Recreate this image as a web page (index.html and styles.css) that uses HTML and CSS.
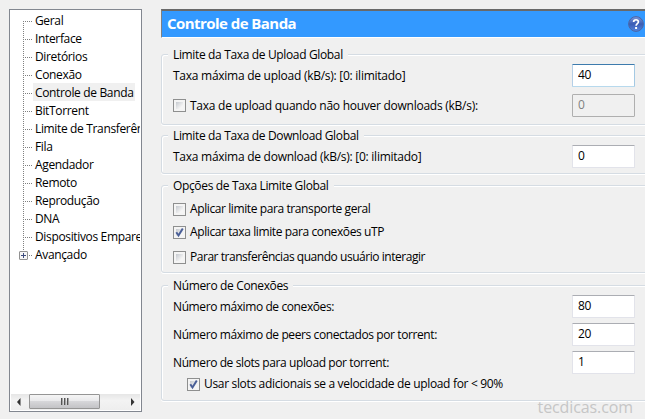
FILE: index.html
```html
<!doctype html>
<html lang="pt-BR">
  <head>
    <meta charset="utf-8">
    <title>Controle de Banda</title>
    <link rel="stylesheet" href="styles.css">
  </head>

  <body>
    <div id="container">
      <div id="sidebar">
        <ul class="tree">
          <li><span>Geral</span></li>
          <li><span>Interface</span></li>
          <li><span>Diretórios</span></li>
          <li><span>Conexão</span></li>
          <li class="selected"><span>Controle de Banda</span></li>
          <li><span>BitTorrent</span></li>
          <li><span>Limite de Transferên</span></li>
          <li><span>Fila</span></li>
          <li><span>Agendador</span></li>
          <li><span>Remoto</span></li>
          <li><span>Reprodução</span></li>
          <li><span>DNA</span></li>
          <li><span>Dispositivos Empare</span></li>
          <li class="parent">
            <svg class="expander" width="9" height="9" viewBox="0 0 9 9">
              <rect x="0.5" y="0.5" width="8" height="8" rx="0.5" fill="#f6f6f6" stroke="#919191" />
              <path d="M2 4.5h5M4.5 2v5" stroke="#3c4b7d" />
            </svg>
            <span>Avançado</span>
          </li>
        </ul>
        <div class="scrollbar">
          <svg width="18" height="16" viewBox="0 0 18 16">
            <path d="M9.5 4v8L6 8z" fill="#333" />
          </svg>
          <div class="thumb"><i></i><i></i><i></i></div>
          <svg width="18" height="16" viewBox="0 0 18 16">
            <path d="M9 4v8l3.5-4z" fill="#333" />
          </svg>
        </div>
      </div>

      <div id="panel">
        <div class="header">
          <h1>Controle de Banda</h1>
          <svg class="help" width="16" height="16" viewBox="0 0 16 16">
            <defs>
              <linearGradient id="ball" x1="0" y1="0" x2="0" y2="1">
                <stop offset="0" stop-color="#7c98dc" />
                <stop offset="0.5" stop-color="#3a5cb4" />
                <stop offset="1" stop-color="#5484de" />
              </linearGradient>
            </defs>
            <circle cx="8" cy="8" r="7.4" fill="url(#ball)" stroke="#4a66a6" />
            <path d="M5.6 6.1C5.6 2.9 10.6 3 10.4 6 10.3 7.6 8.1 7.6 8.1 9.7" fill="none" stroke="#fff" stroke-width="1.7" />
            <rect x="7.1" y="11" width="2" height="2" fill="#fff" />
          </svg>
        </div>

        <section class="group upload">
          <h2>Limite da Taxa de Upload Global</h2>
          <div class="row">
            <label>Taxa máxima de upload (kB/s): [0: ilimitado]</label>
            <input class="focused" type="text" value="40">
          </div>
          <div class="row">
            <label><b class="check"></b>Taxa de upload quando não houver downloads (kB/s):</label>
            <input type="text" value="0" disabled>
          </div>
        </section>

        <section class="group download">
          <h2>Limite da Taxa de Download Global</h2>
          <div class="row">
            <label>Taxa máxima de download (kB/s): [0: ilimitado]</label>
            <input type="text" value="0">
          </div>
        </section>

        <section class="group options">
          <h2>Opções de Taxa Limite Global</h2>
          <label><b class="check"></b>Aplicar limite para transporte geral</label>
          <label>
            <b class="check"><svg width="13" height="13" viewBox="0 0 13 13"><path d="M3.3 6.2l2.2 3.3 4.3-7" /></svg></b>Aplicar taxa limite para conexões uTP
          </label>
          <label><b class="check"></b>Parar transferências quando usuário interagir</label>
        </section>

        <section class="group connections">
          <h2>Número de Conexões</h2>
          <div class="row">
            <label>Número máximo de conexões:</label>
            <input type="text" value="80">
          </div>
          <div class="row">
            <label>Número máximo de peers conectados por torrent:</label>
            <input type="text" value="20">
          </div>
          <div class="row">
            <label>Número de slots para upload por torrent:</label>
            <input type="text" value="1">
          </div>
          <label class="indent">
            <b class="check"><svg width="13" height="13" viewBox="0 0 13 13"><path d="M3.3 6.2l2.2 3.3 4.3-7" /></svg></b>Usar slots adicionais se a velocidade de upload for &lt; 90%
          </label>
        </section>
      </div>
    </div>
    <div class="watermark">tecdicas.com</div>
  </body>
</html>
```

FILE: styles.css
```css
* {
  box-sizing: border-box;
}

body {
  margin: 0;
  width: 645px;
  height: 419px;
  overflow: hidden;
  position: relative;
  background: #f0f0f0;
  color: #000;
  font: 12px/18px "Open Sans", "Noto Sans", sans-serif;
  letter-spacing: -0.4px;
  white-space: nowrap;
}

#container {
  display: flex;
  gap: 19px;
  padding: 9px 0 0 9px;
}

#sidebar {
  display: flex;
  flex-direction: column;
  justify-content: space-between;
  flex: none;
  width: 133px;
  height: 403px;
  padding: 1px;
  border: 1px solid #828790;
  background: #fff;
}

.tree {
  margin: 0;
  padding: 0 0 0 12px;
  list-style: none;
  overflow: hidden;
}

.tree li {
  display: flex;
  height: 18px;
  /* dotted branch lines */
  background:
    repeating-linear-gradient(90deg, #808080 0 1px, transparent 1px 2px) 0 10px / 9px 1px no-repeat,
    repeating-linear-gradient(#808080 0 1px, transparent 1px 2px) 0 0 / 1px 18px no-repeat;
  padding-left: 10px;
}

.tree li:first-child {
  background-position: 0 10px, 0 10px;
}

.tree li.parent {
  background-size: 9px 1px, 1px 10px;
  margin-left: -4px;
  padding-left: 0;
  background-position: 4px 10px, 4px 0;
}

.tree span {
  height: 18px;
  padding: 1px 2px 0;
  line-height: 17px;
  letter-spacing: -0.35px;
}

.tree .selected span {
  background: #f0f0f0;
}

.expander {
  margin: 6px 5px 0 0;
}

.scrollbar {
  display: flex;
  height: 16px;
  background: linear-gradient(#e6e6e6, #f3f3f3 40%, #eee);
}

.scrollbar svg {
  flex: none;
}

.thumb {
  display: flex;
  gap: 1px;
  align-items: center;
  justify-content: center;
  width: 71px;
  margin-right: 22px;
  height: 15px;
  border: 1px solid #959595;
  border-radius: 1px;
  background: linear-gradient(#f5f5f5, #e9e9eb 45%, #d6d6d9 50%, #c3c3c6);
}

.thumb i {
  width: 2px;
  height: 7px;
  border-left: 1px solid #555;
  border-right: 1px solid #a5a5a5;
}

#panel {
  flex: 1;
  min-width: 0;
}

.header {
  display: flex;
  align-items: center;
  justify-content: space-between;
  height: 29px;
  padding: 0 1px 0 5px;
  border: solid;
  border-width: 2px 0 1px 1px;
  border-color: #696969 transparent #fff #808080;
  background: #39f;
}

h1 {
  margin: 0 0 2px;
  font-size: 15px;
  line-height: 20px;
  letter-spacing: -0.55px;
  color: #fff;
}

.group {
  width: 500px;
  border: 1px solid #d5dce3;
  border-radius: 3px;
  box-shadow: inset 1px 1px 0 #fff, 0 1px 0 #fff;
  padding-left: 11px;
}

h2 {
  width: max-content;
  height: 18px;
  margin: -9px 0 0 -5px;
  padding: 0 5px;
  background: #f0f0f0;
  font-size: 12px;
  line-height: 18px;
  font-weight: normal;
  letter-spacing: -0.35px;
}

.row {
  display: flex;
  align-items: center;
  justify-content: space-between;
  width: 462px;
  height: 23px;
}

label {
  display: flex;
  align-items: center;
  height: 18px;
}

input {
  width: 63px;
  height: 23px;
  padding: 0 5px 2px;
  border: 1px solid #e2e3ea;
  border-top-color: #abadb3;
  border-radius: 1px;
  background: #fff;
  color: #000;
  font: inherit;
  letter-spacing: -0.4px;
}

.focused {
  border-color: #3d7bad #a4c9e3 #b7d9ed #b5cfe7;
}

input:disabled {
  border-color: #afafaf;
  background: #f0f0f0;
  color: #808080;
}

.check {
  flex: none;
  width: 13px;
  height: 13px;
  margin-right: 4px;
  border: 1px solid #8e8f8f;
  background: linear-gradient(135deg, #c5c9cf, #f5f5f5 75%) 2px 2px / 7px 7px no-repeat #f4f4f4;
}

.check svg {
  display: block;
  margin: -1px;
}

.check path {
  fill: none;
  stroke: #4a5f97;
  stroke-width: 2;
}

.upload {
  height: 71px;
  margin-top: 16px;
}

.upload .row {
  margin-bottom: 7px;
}

.upload label,
.download label {
  letter-spacing: -0.26px;
}

.download {
  height: 39px;
  margin-top: 10px;
}

.options {
  height: 88px;
  margin-top: 11px;
}

.options label {
  margin-top: 5px;
}

.options label:last-child {
  margin-top: 7px;
  letter-spacing: -0.46px;
}

.connections {
  height: 116px;
  margin-top: 12px;
}

.connections .row {
  margin-bottom: 5px;
}

.indent {
  margin: -4px 0 0 14px;
  letter-spacing: -0.33px;
}

.watermark {
  position: absolute;
  right: 12px;
  bottom: 0;
  color: #c6c6c6;
  font-size: 16px;
  line-height: 24px;
  letter-spacing: -0.1px;
}
```
